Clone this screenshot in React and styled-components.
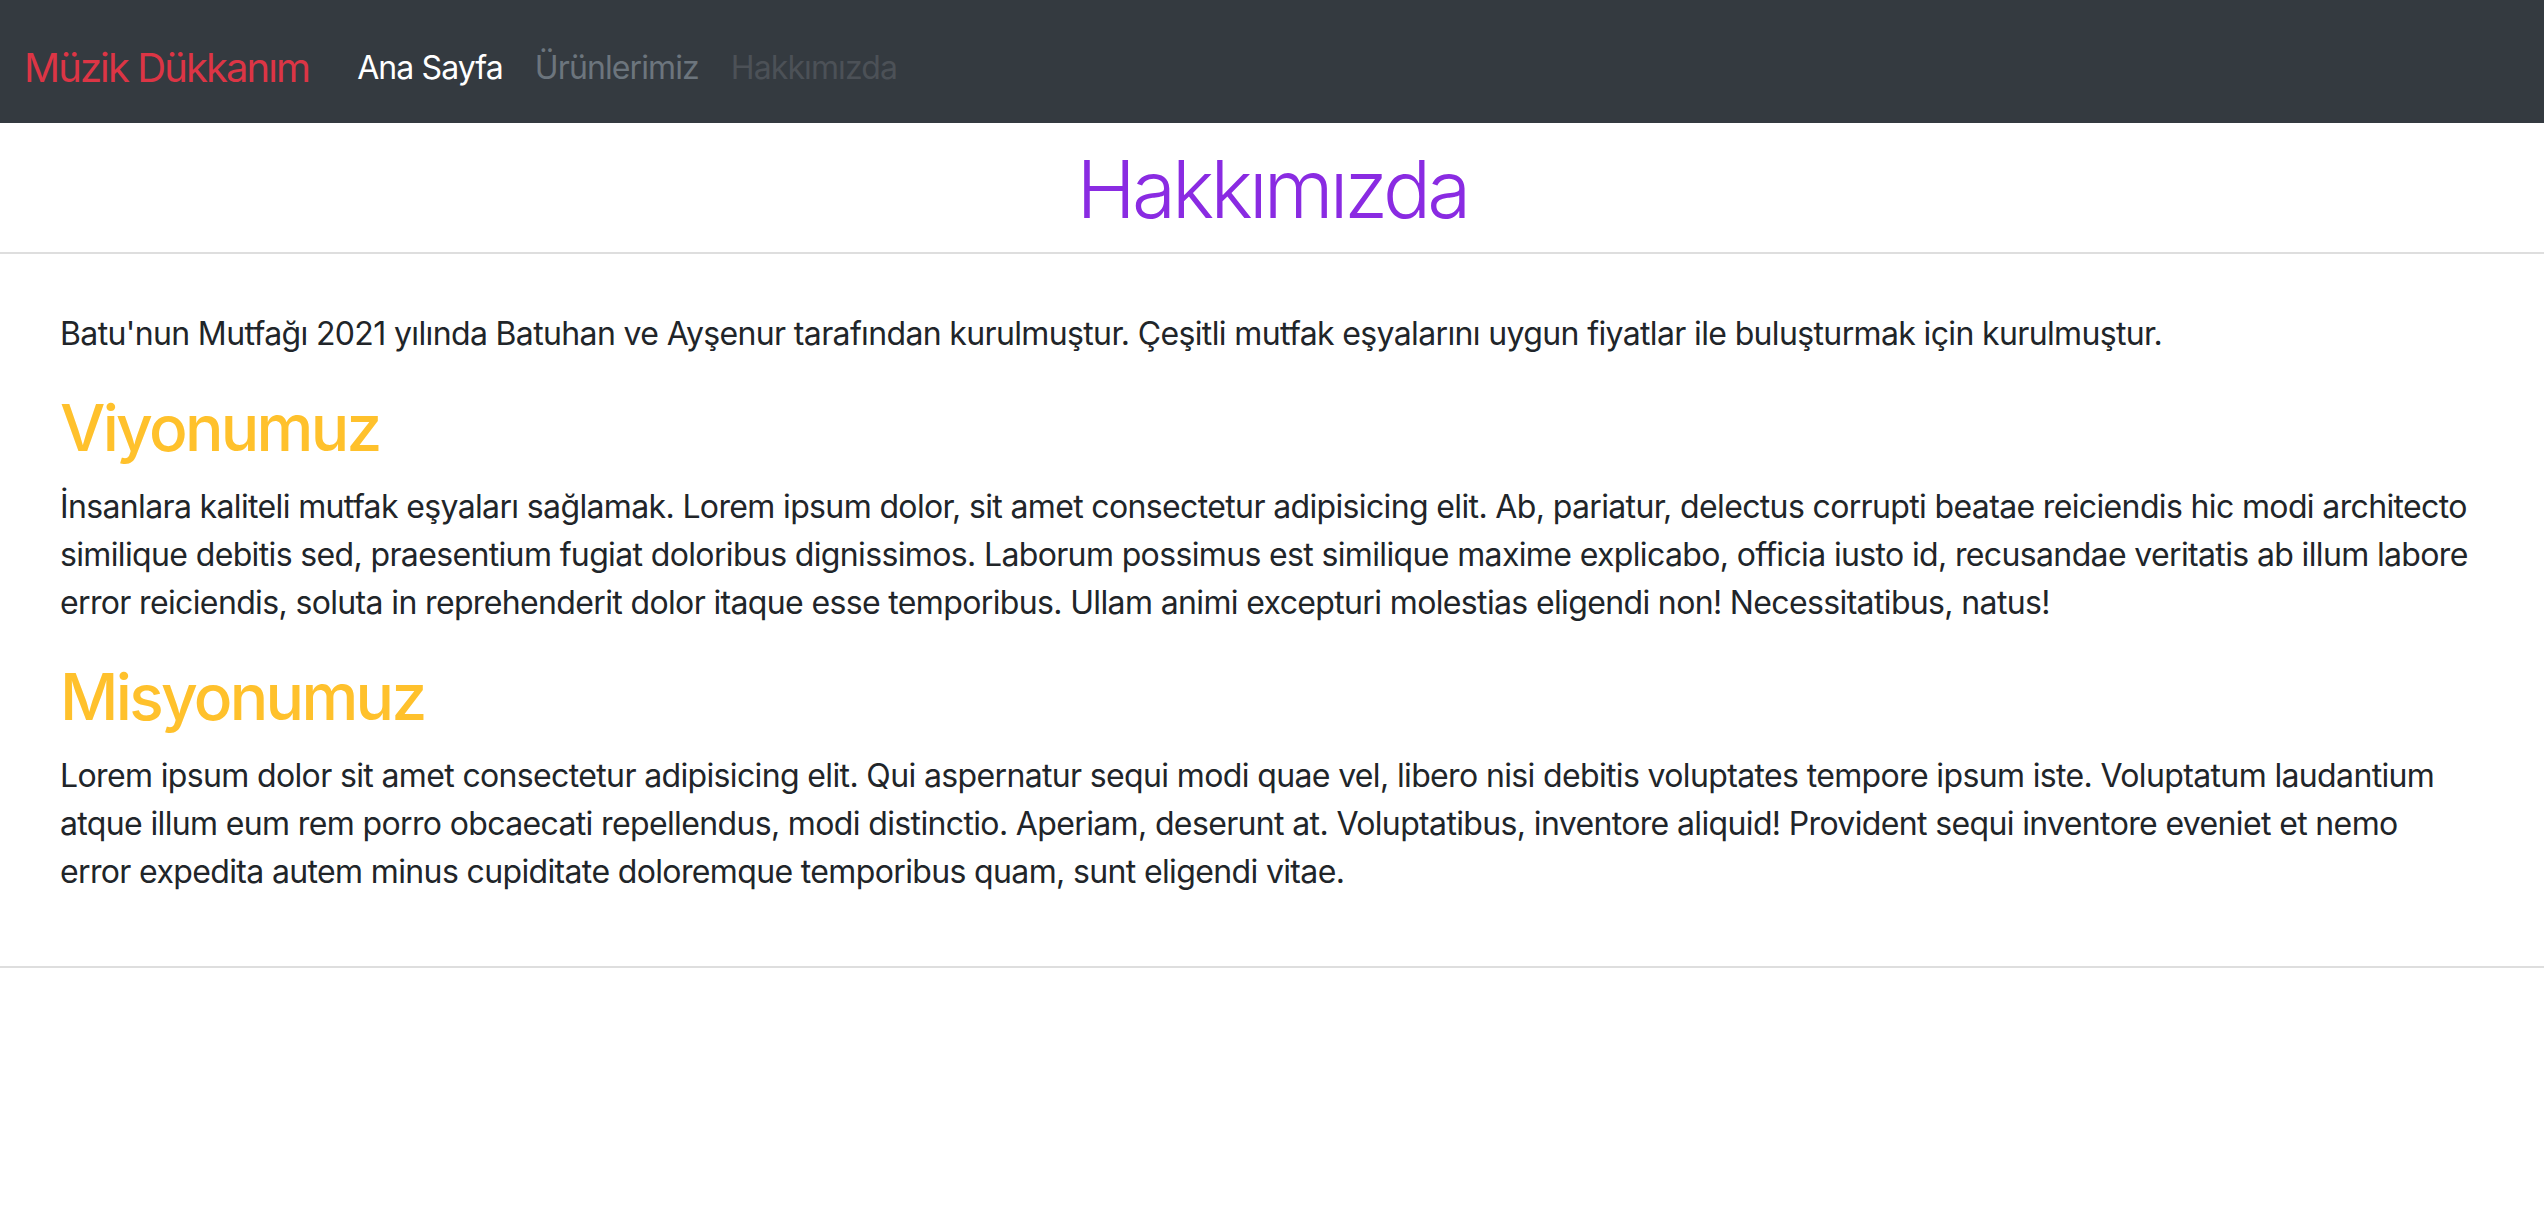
import React from "react";
import styled, { createGlobalStyle } from "styled-components";

const GlobalStyle = createGlobalStyle`
  * { box-sizing: border-box; }
  html, body { margin: 0; padding: 0; background: #fff; }
  body {
    font-family: Inter, "Noto Sans", "Liberation Sans", sans-serif;
    font-size: 32px;
    line-height: 1.5;
    color: #212529;
    letter-spacing: -0.02em;
  }
`;

const Navbar = styled.nav`
  height: 123px;
  background: #343a40;
  display: flex;
  align-items: center;
  padding: 13px 24px 0;
`;

const Brand = styled.a`
  font-size: 40px;
  line-height: 60px;
  padding: 10px 0;
  margin-right: 32px;
  color: #dc3545;
  text-decoration: none;
  white-space: nowrap;
  letter-spacing: -0.048em;
`;

const NavList = styled.ul`
  display: flex;
  list-style: none;
  margin: 0;
  padding: 0;
`;

const NavLink = styled.a`
  display: block;
  padding: 8px 16px;
  font-size: 32px;
  line-height: 48px;
  letter-spacing: -0.028em;
  text-decoration: none;
  color: ${(p) => (p.$state === "active" ? "#ffffff" : p.$state === "disabled" ? "#4c5157" : "#6c757d")};
`;

const Header = styled.header`
  padding-top: 18px;
`;

const PageTitle = styled.h1`
  margin: 0;
  text-align: center;
  font-size: 80px;
  line-height: 96px;
  font-weight: 300;
  letter-spacing: -0.048em;
  color: blueviolet;
`;

const Rule = styled.hr`
  margin: ${(p) => p.$top}px 0 0;
  border: 0;
  border-top: 2px solid #dedede;
  height: 0;
`;

const Content = styled.main`
  padding: 56px 69px 6px 60px;
`;

const Text = styled.p`
  margin: 0 0 32px;
`;

const SectionTitle = styled.h2`
  margin: 0 0 16px;
  font-size: 64px;
  line-height: 1.2;
  font-weight: 500;
  letter-spacing: -0.042em;
  color: #ffc12c;
`;

export default function App() {
  return (
    <>
      <GlobalStyle />
      <Navbar>
        <Brand href="#">Müzik Dükkanım</Brand>
        <NavList>
          <li><NavLink href="#" $state="active">Ana Sayfa</NavLink></li>
          <li><NavLink href="#">Ürünlerimiz</NavLink></li>
          <li><NavLink href="#" $state="disabled">Hakkımızda</NavLink></li>
        </NavList>
      </Navbar>
      <Header>
        <PageTitle>Hakkımızda</PageTitle>
        <Rule $top={15} />
      </Header>
      <Content>
        <Text>
          Batu'nun Mutfağı 2021 yılında Batuhan ve Ayşenur tarafından kurulmuştur. Çeşitli mutfak eşyalarını uygun fiyatlar ile buluşturmak için kurulmuştur.
        </Text>
        <SectionTitle>Viyonumuz</SectionTitle>
        <Text>
          İnsanlara kaliteli mutfak eşyaları sağlamak. Lorem ipsum dolor, sit amet consectetur adipisicing elit. Ab, pariatur, delectus corrupti beatae reiciendis hic modi architecto similique debitis sed, praesentium fugiat doloribus dignissimos. Laborum possimus est similique maxime explicabo, officia iusto id, recusandae veritatis ab illum labore error reiciendis, soluta in reprehenderit dolor itaque esse temporibus. Ullam animi excepturi molestias eligendi non! Necessitatibus, natus!
        </Text>
        <SectionTitle>Misyonumuz</SectionTitle>
        <Text>
          Lorem ipsum dolor sit amet consectetur adipisicing elit. Qui aspernatur sequi modi quae vel, libero nisi debitis voluptates tempore ipsum iste. Voluptatum laudantium atque illum eum rem porro obcaecati repellendus, modi distinctio. Aperiam, deserunt at. Voluptatibus, inventore aliquid! Provident sequi inventore eveniet et nemo error expedita autem minus cupiditate doloremque temporibus quam, sunt eligendi vitae.
        </Text>
      </Content>
      <Rule $top={32} />
    </>
  );
}
